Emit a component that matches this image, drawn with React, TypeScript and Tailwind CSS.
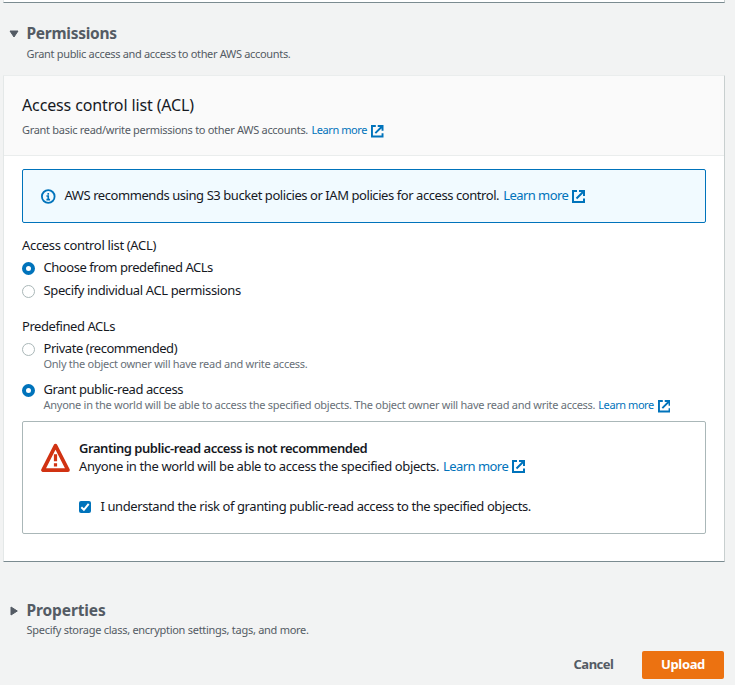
import type { ReactNode } from 'react';

function External({ className }: { className: string }) {
  return (
    <svg viewBox="0 0 13 13" fill="none" stroke="#0073bb" strokeWidth="2" className={`shrink-0 ${className}`}>
      <path d="M5 1H1v11h11V8.5" />
      <path d="M7 1h5v5M12 1L4.5 8.5" />
    </svg>
  );
}

function Radio({ checked, className }: { checked?: boolean; className: string }) {
  return (
    <span
      className={`box-border h-[13px] w-[13px] shrink-0 rounded-full bg-white ${
        checked ? 'border-4 border-[#0073bb]' : 'border border-[#aab7b8]'
      } ${className}`}
    />
  );
}

function Body({ children, className }: { children: ReactNode; className: string }) {
  return <span className={`block text-[13px] leading-[18px] ${className}`}>{children}</span>;
}

function Small({ children, className }: { children: ReactNode; className: string }) {
  return <span className={`block text-[11px] leading-4 ${className}`}>{children}</span>;
}

export default function App() {
  return (
    <div className="h-[685px] w-[735px] overflow-hidden whitespace-nowrap bg-[#f2f3f3] font-['Noto_Sans','Open_Sans',sans-serif] text-[#16191f]">
      <div className="ml-[3px] h-[3px] w-[722px] border-x border-b border-l-[#e4e8e8] border-r-[#c8cfcf] border-b-[#7b8b90] bg-white" />

      <section className="flex h-[73px] pt-5 text-[#545b64]">
        <svg viewBox="0 0 10 8" className="ml-[9px] mt-[7px] h-2 w-[10px]" fill="#545b64">
          <path d="M1 1h8L5 7z" stroke="#545b64" strokeWidth="1" strokeLinejoin="round" />
        </svg>
        <div className="ml-[7.5px]">
          <h2 className="text-[15.5px] font-bold leading-5 tracking-[-0.28px]">Permissions</h2>
          <Small className="mt-[3px] tracking-[-0.32px]">Grant public access and access to other AWS accounts.</Small>
        </div>
      </section>

      <section className="-mt-px ml-[3px] h-[487px] w-[722px] rounded-[1px] border border-b-[#7b8b90] border-l-[#e4e8e8] border-r-[#c8cfcf] border-t-[#eaeded] bg-white">
        <header className="h-[80px] border-b border-[#eaeded] bg-[#fafafa] pl-[18px] pt-[19px]">
          <h3 className="text-[16px] leading-5 tracking-[-0.13px]">Access control list (ACL)</h3>
          <div className="mt-[7px] flex">
            <Small className="tracking-[-0.297px] text-[#545b64]">Grant basic read/write permissions to other AWS accounts.</Small>
            <Small className="ml-[3.5px] tracking-[-0.43px] text-[#0073bb]">Learn more</Small>
            <External className="ml-1 mt-[3px] h-[12.5px] w-[12.5px]" />
          </div>
        </header>

        <div className="px-[18px] pt-[13px]">
          <div className="flex h-[54px] rounded-[2px] border border-[#0073bb] bg-[#f1faff] pl-[18px] pt-4">
            <svg viewBox="0 0 16 16" fill="none" stroke="#0073bb" strokeWidth="2" className="mt-[3px] h-[15px] w-[14.5px]">
              <circle cx="8" cy="8" r="7" />
              <path d="M8 12V7.5H6M6 11.5h4M8 6V4" strokeWidth="1.8" />
            </svg>
            <Body className="ml-[9px] tracking-[-0.434px]">AWS recommends using S3 bucket policies or IAM policies for access control.</Body>
            <Body className="ml-1 tracking-[-0.55px] text-[#0073bb]">Learn more</Body>
            <External className="ml-[3.5px] mt-[3.5px] h-[13px] w-[13px]" />
          </div>

          <Body className="mt-[13px] tracking-[-0.336px]">Access control list (ACL)</Body>
          <div className="mt-1 flex">
            <Radio checked className="mt-1" />
            <Body className="ml-[8.5px] tracking-[-0.45px]">Choose from predefined ACLs</Body>
          </div>
          <div className="mt-[5px] flex">
            <Radio className="mt-[3.5px]" />
            <Body className="ml-[8.5px] tracking-[-0.37px]">Specify individual ACL permissions</Body>
          </div>

          <Body className="mt-[18px] tracking-[-0.434px]">Predefined ACLs</Body>
          <div className="mt-1 flex">
            <Radio className="mt-1" />
            <div className="ml-[8.5px]">
              <Body className="tracking-[-0.46px]">Private (recommended)</Body>
              <Small className="-mt-px tracking-[-0.271px] text-[#687078]">Only the object owner will have read and write access.</Small>
            </div>
          </div>
          <div className="mt-2 flex">
            <Radio checked className="mt-[3.5px]" />
            <div className="ml-[8.5px]">
              <Body className="tracking-[-0.43px]">Grant public-read access</Body>
              <div className="-mt-px flex">
                <Small className="tracking-[-0.268px] text-[#687078]">Anyone in the world will be able to access the specified objects. The object owner will have read and write access.</Small>
                <Small className="ml-[3px] tracking-[-0.43px] text-[#0073bb]">Learn more</Small>
                <External className="ml-1 mt-[3px] h-[12.5px] w-[12.5px]" />
              </div>
            </div>
          </div>

          <div className="mt-2 flex h-[113px] rounded-[2px] border border-[#aab7b8] pl-[18px] pt-[17px]">
            <svg viewBox="0 0 29 29" fill="none" stroke="#d13212" className="mt-[3.5px] h-[29px] w-[29px]">
              <path d="M14.5 2.7L2 27.1h25z" strokeWidth="3.7" strokeLinejoin="round" />
              <path d="M14.5 11.3v6.9M14.5 20.2v3.3" strokeWidth="3.2" />
            </svg>
            <div className="ml-[9px]">
              <Body className="font-semibold tracking-[-0.46px]">Granting public-read access is not recommended</Body>
              <div className="flex">
                <Body className="tracking-[-0.383px]">Anyone in the world will be able to access the specified objects.</Body>
                <Body className="ml-1 tracking-[-0.55px] text-[#0073bb]">Learn more</Body>
                <External className="ml-1 mt-[3px] h-[13px] w-[13px]" />
              </div>
              <div className="mt-[22px] flex">
                <span className="mt-1 flex h-3 w-3 rounded-[2px] bg-[#0073bb]">
                  <svg viewBox="0 0 12 12" fill="none" stroke="white" strokeWidth="2" className="h-3 w-3">
                    <path d="M2.3 6.2l2.6 2.6 4.8-6" />
                  </svg>
                </span>
                <Body className="ml-[9.5px] tracking-[-0.405px]">I understand the risk of granting public-read access to the specified objects.</Body>
              </div>
            </div>
          </div>
        </div>
      </section>

      <section className="flex h-[89px] pt-[38px] text-[#545b64]">
        <svg viewBox="0 0 8 10" className="ml-[10px] mt-[6px] h-[10px] w-2" fill="#545b64">
          <path d="M1 1v8l6.3-4z" stroke="#545b64" strokeWidth="1" strokeLinejoin="round" />
        </svg>
        <div className="ml-[8.5px]">
          <h2 className="text-[15.5px] font-bold leading-5 tracking-[-0.12px]">Properties</h2>
          <Small className="mt-[2px] tracking-[-0.275px]">Specify storage class, encryption settings, tags, and more.</Small>
        </div>
      </section>

      <footer className="flex justify-end pr-[11px]">
        <button className="mr-[28.5px] flex h-7 text-[13px] font-bold leading-[26px] tracking-[-0.49px] text-[#545b64]">Cancel</button>
        <button className="flex h-7 w-[82px] justify-center rounded-[2px] bg-[#ec7211] text-[13px] font-bold leading-[26px] tracking-[-0.34px] text-white">Upload</button>
      </footer>
    </div>
  );
}
